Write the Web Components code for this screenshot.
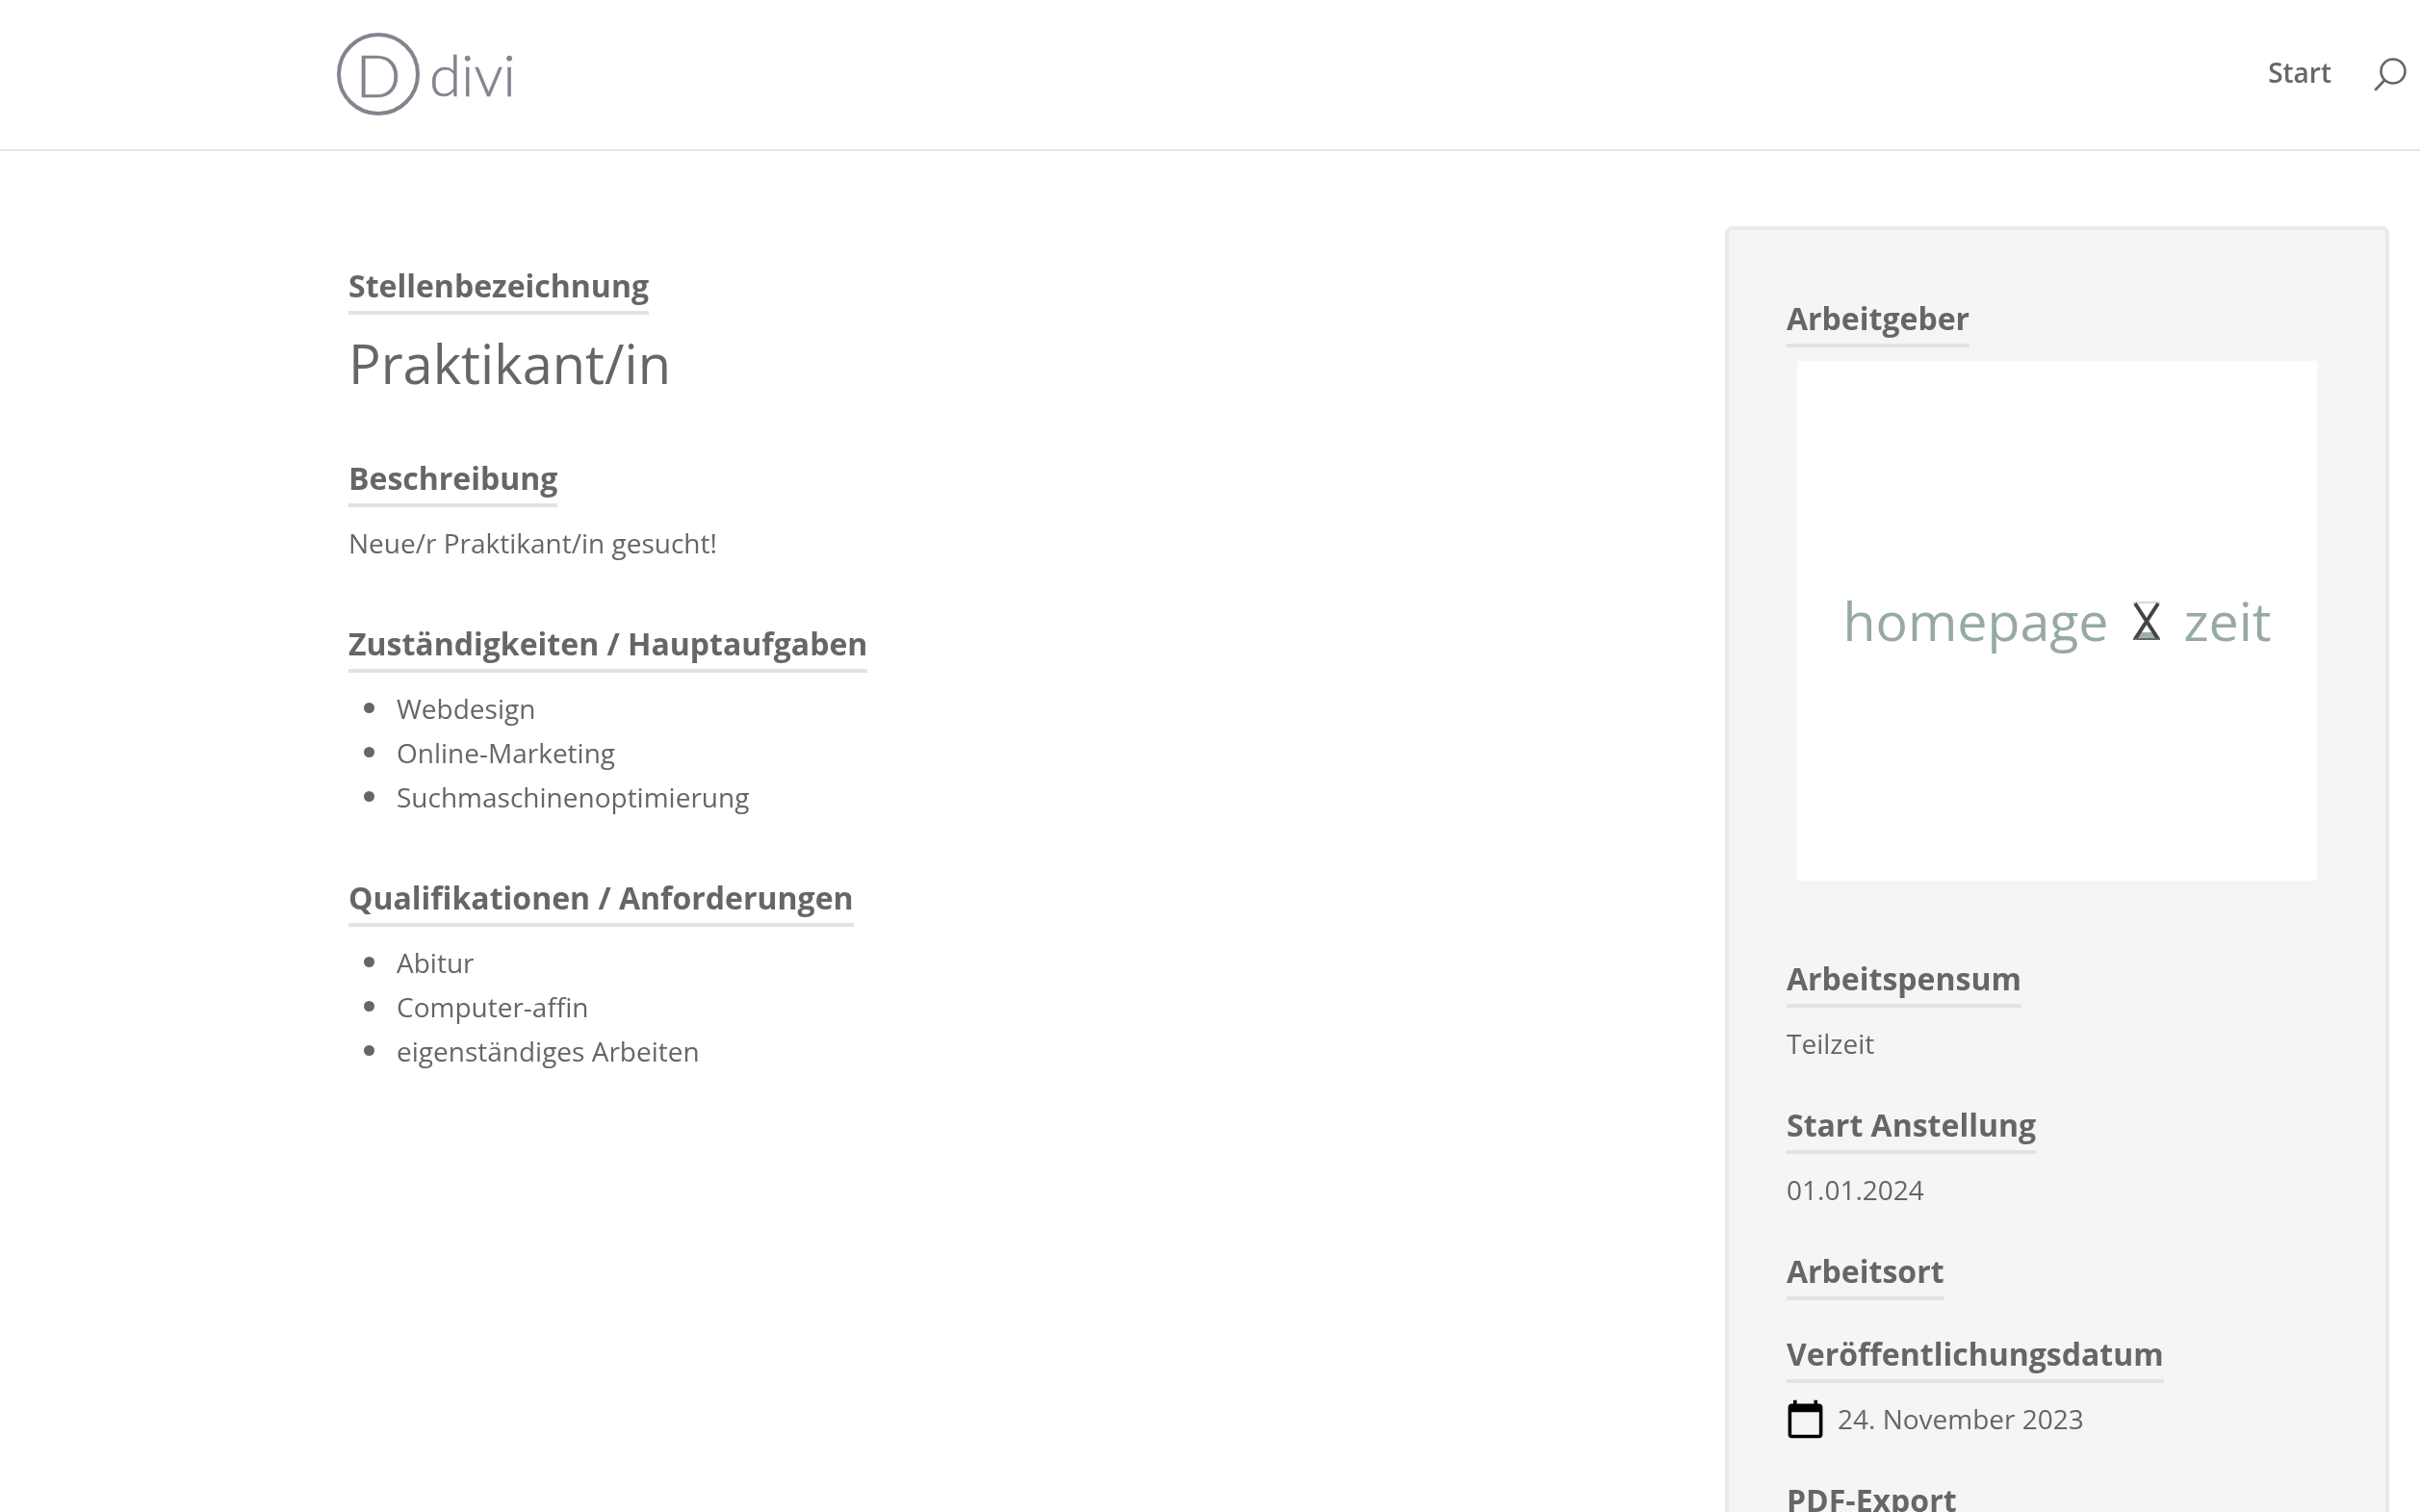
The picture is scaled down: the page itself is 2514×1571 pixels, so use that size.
<!DOCTYPE html>
<html lang="de">
<head>
<meta charset="utf-8">
<title>Praktikant/in</title>
<style>
    html, body{
        margin: 0;
        height: 1571px;
        overflow: hidden;
        background: #fff;
        font-family: "Open Sans", sans-serif;
        font-size: 28px;
        line-height: 46px;
        color: #666;
    }
</style>
</head>
<body>
<site-header></site-header>
<job-page>
    <job-main>
        <job-section label="Stellenbezeichnung" gap="13"><job-title>Praktikant/in</job-title></job-section>
        <job-section label="Beschreibung">Neue/r Praktikant/in gesucht!</job-section>
        <job-section label="Zuständigkeiten / Hauptaufgaben">
            <job-list items="Webdesign|Online-Marketing|Suchmaschinenoptimierung"></job-list>
        </job-section>
        <job-section label="Qualifikationen / Anforderungen">
            <job-list items="Abitur|Computer-affin|eigenständiges Arbeiten"></job-list>
        </job-section>
    </job-main>
    <job-panel>
        <job-section label="Arbeitgeber"><employer-logo></employer-logo></job-section>
        <job-section label="Arbeitspensum">Teilzeit</job-section>
        <job-section label="Start Anstellung">01.01.2024</job-section>
        <job-section label="Arbeitsort"></job-section>
        <job-section label="Veröffentlichungsdatum"><date-line>24. November 2023</date-line></job-section>
        <job-section label="PDF-Export"></job-section>
    </job-panel>
</job-page>

<script>
class SiteHeader extends HTMLElement{
    connectedCallback(){
        const shadowRoot = this.attachShadow({mode: 'open'})
        shadowRoot.innerHTML = `<style>
                :host{
                    display: flex;
                    align-items: center;
                    justify-content: space-between;
                    height: 155px;
                    border-bottom: 2px solid #e4e4e4;
                    padding-left: 350px;
                    padding-right: 14px;
                    filter: blur(.35px);
                }
                #logo{
                    display: flex;
                    align-items: center;
                    gap: 10px;
                    color: #84848f;
                    font-family: "Lato", sans-serif;
                    font-weight: 300;
                    -webkit-text-stroke: .6px #84848f;
                    margin-top: -2px;
                }
                #circle{
                    box-sizing: border-box;
                    width: 86px;
                    height: 86px;
                    border: 4px solid #84848f;
                    border-radius: 50%;
                    display: flex;
                    align-items: center;
                    justify-content: center;
                    font-size: 62px;
                    line-height: 1;
                }
                #word{
                    font-size: 60px;
                    line-height: 1;
                }
                nav{
                    display: flex;
                    align-items: center;
                    gap: 44px;
                    margin-top: -6px;
                }
                a{
                    color: #666;
                    font-weight: 600;
                    font-size: 28px;
                    text-decoration: none;
                }
                svg{
                    display: block;
                    margin-top: 6px;
                }
            </style>
            <div id="logo"><div id="circle">D</div><div id="word">divi</div></div>
            <nav>
                <a href="#">Start</a>
                <svg width="34" height="36" viewBox="0 0 34 36" fill="none" stroke="#666" stroke-width="2.6" stroke-linecap="round">
                    <circle cx="20" cy="14" r="12.5"/>
                    <path d="M11 23.5 2 33"/>
                </svg>
            </nav>`
    }
}

class JobPage extends HTMLElement{
    connectedCallback(){
        const shadowRoot = this.attachShadow({mode: 'open'})
        shadowRoot.innerHTML = `<style>
                :host{
                    display: flex;
                    justify-content: space-between;
                    align-items: flex-start;
                    padding: 78px 32px 0 362px;
                    filter: blur(.35px);
                }
            </style>
            <slot></slot>`
    }
}

class JobMain extends HTMLElement{
    connectedCallback(){
        const shadowRoot = this.attachShadow({mode: 'open'})
        shadowRoot.innerHTML = `<style>
                :host{
                    display: flex;
                    flex-direction: column;
                    gap: 58px;
                    padding-top: 38px;
                }
            </style>
            <slot></slot>`
    }
}

class JobPanel extends HTMLElement{
    connectedCallback(){
        const shadowRoot = this.attachShadow({mode: 'open'})
        shadowRoot.innerHTML = `<style>
                :host{
                    box-sizing: border-box;
                    width: 690px;
                    display: flex;
                    flex-direction: column;
                    gap: 38px;
                    padding: 68px 60px 40px;
                    background: #f5f5f5;
                    border: 4px solid #e9e9e9;
                    border-radius: 8px;
                }
            </style>
            <slot></slot>`
    }
}

class JobSection extends HTMLElement{
    connectedCallback(){
        const shadowRoot = this.attachShadow({mode: 'open'})
        const gap = this.getAttribute('gap') || '14'
        const empty = this.textContent.trim() === '' && this.children.length === 0
        shadowRoot.innerHTML = `<style>
                :host{
                    display: block;
                    margin-bottom: ${empty ? '-6px' : '0'};
                }
                h4{
                    display: table;
                    margin: 0;
                    padding-bottom: 3px;
                    font-size: 32px;
                    line-height: 47px;
                    font-weight: 700;
                    color: #666;
                    border-bottom: 4px solid #e2e2e2;
                }
                #body{
                    margin-top: ${gap}px;
                }
            </style>
            <h4>${this.getAttribute('label')}</h4>
            ${empty ? '' : '<div id="body"><slot></slot></div>'}`
    }
}

class JobTitle extends HTMLElement{
    connectedCallback(){
        const shadowRoot = this.attachShadow({mode: 'open'})
        shadowRoot.innerHTML = `<style>
                :host{
                    display: block;
                    font-size: 56px;
                    line-height: 75px;
                    color: #666;
                }
            </style>
            <slot></slot>`
    }
}

class JobList extends HTMLElement{
    connectedCallback(){
        const shadowRoot = this.attachShadow({mode: 'open'})
        const items = this.getAttribute('items').split('|')
        shadowRoot.innerHTML = `<style>
                :host{
                    display: block;
                }
                ul{
                    margin: 0;
                    padding: 0 0 0 16px;
                    list-style: none;
                }
                li{
                    display: flex;
                    align-items: center;
                    gap: 23px;
                }
                li::before{
                    content: "";
                    width: 11px;
                    height: 11px;
                    border-radius: 50%;
                    background: #666;
                    margin-top: -1px;
                }
            </style>
            <ul>${items.map(item => `<li>${item}</li>`).join('')}</ul>`
    }
}

class EmployerLogo extends HTMLElement{
    connectedCallback(){
        const shadowRoot = this.attachShadow({mode: 'open'})
        shadowRoot.innerHTML = `<style>
                :host{
                    display: flex;
                    align-items: center;
                    justify-content: center;
                    gap: 22px;
                    width: 540px;
                    height: 540px;
                    margin-left: 11px;
                    margin-bottom: 40px;
                    background: #fff;
                    font-size: 55.5px;
                    color: #96aaa2;
                }
                span, svg{
                    filter: blur(.6px);
                }
            </style>
            <span>homepage</span>
            <svg width="34" height="42" viewBox="0 0 34 42" fill="none" stroke="#444" stroke-width="4">
                <path d="M3 2h28" stroke="#ccc" stroke-width="1.5"/>
                <path d="M11 33h12l5 7H6z" fill="#9cb0a8" stroke="none"/>
                <path d="M5 3 29 40M29 3 5 40"/>
                <path d="M3 40h28" stroke="#666" stroke-width="2"/>
            </svg>
            <span>zeit</span>`
    }
}

class DateLine extends HTMLElement{
    connectedCallback(){
        const shadowRoot = this.attachShadow({mode: 'open'})
        shadowRoot.innerHTML = `<style>
                :host{
                    display: flex;
                    align-items: center;
                    gap: 12px;
                }
                svg{
                    display: block;
                    margin-left: -2px;
                }
            </style>
            <svg width="43" height="43" viewBox="0 0 24 24" fill="#000">
                <path d="M20 3h-1V1h-2v2H7V1H5v2H4c-1.1 0-2 .9-2 2v16c0 1.1.9 2 2 2h16c1.1 0 2-.9 2-2V5c0-1.1-.9-2-2-2zm0 18H4V8h16v13z"/>
            </svg>
            <slot></slot>`
    }
}

customElements.define('site-header', SiteHeader)
customElements.define('job-page', JobPage)
customElements.define('job-main', JobMain)
customElements.define('job-panel', JobPanel)
customElements.define('job-section', JobSection)
customElements.define('job-title', JobTitle)
customElements.define('job-list', JobList)
customElements.define('employer-logo', EmployerLogo)
customElements.define('date-line', DateLine)
</script>
</body>
</html>
